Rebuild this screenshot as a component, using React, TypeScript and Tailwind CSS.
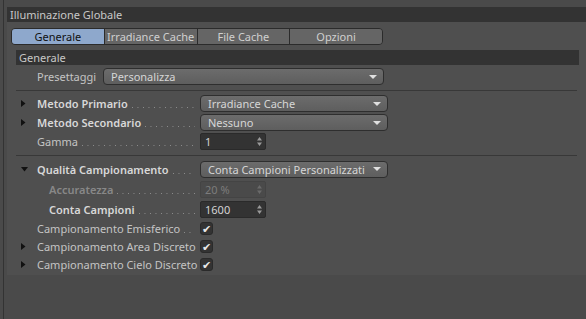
import React from 'react';

const font = "font-['Noto_Sans','DejaVu_Sans',sans-serif]";

const tabs = ['Generale', 'Irradiance Cache', 'File Cache', 'Opzioni'];

const Arrow = ({ open }: { open?: boolean }) =>
  open ? (
    <svg width="7" height="5" viewBox="0 0 7 5"><path d="M0 0h7L3.5 4.5z" fill="#111" /></svg>
  ) : (
    <svg width="5" height="7" viewBox="0 0 5 7"><path d="M0 0v7l4.5-3.5z" fill="#111" /></svg>
  );

const Label = ({
  text,
  bold,
  dim,
  indent,
  arrow,
  open,
}: {
  text: string;
  bold?: boolean;
  dim?: boolean;
  indent?: boolean;
  arrow?: boolean;
  open?: boolean;
}) => (
  <div
    className={`w-[193px] shrink-0 flex items-center pl-[14px] pr-[5px] ${
      dim ? 'text-[#888888]' : bold ? 'text-[#d8d8d8]' : 'text-[#c4c4c4]'
    }`}
  >
    <span className="w-[16px] shrink-0 flex items-center">{arrow && <Arrow open={open} />}</span>
    {indent && <span className="w-[12px] shrink-0" />}
    <span className={`shrink-0 whitespace-nowrap ${bold ? 'font-semibold' : ''}`}>{text}</span>
    {/* dotted leader */}
    <div className="flex-1 min-w-0 h-px mt-[8px] ml-[4px] bg-[linear-gradient(to_right,#8e8e8e_1px,transparent_1px)] bg-[length:5.5px_1px]" />
  </div>
);

const Dropdown = ({ value, w }: { value: string; w: string }) => (
  <div
    className={`${w} h-[17px] rounded-[4px] border border-[#2e2e2e] bg-gradient-to-b from-[#6c6c6c] to-[#5e5e5e] flex items-center pl-[7px] pr-[6px] text-[#d6d6d6]`}
  >
    <span className="flex-1 whitespace-nowrap">{value}</span>
    <svg width="8" height="4" viewBox="0 0 8 4"><path d="M0 0h8L4 4z" fill="#e0e0e0" /></svg>
  </div>
);

const NumField = ({ value, dim }: { value: string; dim?: boolean }) => (
  <div
    className={`w-[66px] h-[17px] rounded-[2px] border flex items-center pl-[4px] pr-[3px] ${
      dim ? 'bg-[#4a4a4a] border-[#444] text-[#7c7c7c]' : 'bg-[#333333] border-[#2a2a2a] text-[#d4d4d4]'
    }`}
  >
    <span className="flex-1">{value}</span>
    <svg width="5" height="9" viewBox="0 0 5 9">
      <path d="M0 3.5h5L2.5 0z M0 5.5h5L2.5 9z" fill={dim ? '#6a6a6a' : '#9a9a9a'} />
    </svg>
  </div>
);

const Check = () => (
  <div className="w-[13px] h-[13px] rounded-[3px] bg-[#333333] border border-[#2a2a2a] flex items-center justify-center text-[#e8e8e8] text-[11px] leading-none">
    ✔
  </div>
);

const Sep = ({ className }: { className: string }) => <div className={`h-px bg-[#383838] mx-[9px] ${className}`} />;

export default function App() {
  return (
    <div className={`w-[586px] h-[319px] bg-[#4a4a4a] flex text-[11px] leading-none overflow-hidden ${font}`}>
      <div className="w-[7px] shrink-0 pl-[3px]">
        <div className="w-px h-full bg-[#333333]" />
      </div>
      <div className="flex-1 flex flex-col pt-[7px]">
        <div className="h-[15px] bg-[#333333] flex items-center pl-[3px] text-[#c8c8c8]">Illuminazione Globale</div>
        <div className="bg-[#4f4f4f] h-[253px] pt-[6px]">
          <div className="ml-[4px] flex h-[17px] w-[372px] rounded-[4px] border border-[#2b2b2b] overflow-hidden">
            {tabs.map((t, i) => (
              <div
                key={t}
                className={`flex-1 flex items-center justify-center ${i > 0 ? 'border-l border-[#2b2b2b]' : ''} ${
                  i === 0 ? 'bg-[#8ea8cc] text-[#111]' : 'bg-[#656565] text-[#d0d0d0]'
                }`}
              >
                {t}
              </div>
            ))}
          </div>
          <div className="mt-[5px] ml-[9px] w-[563px] h-[15px] bg-[#333333] flex items-center pl-[3px] text-[#c8c8c8]">
            Generale
          </div>
          <div className="mt-[3px] flex items-center h-[17px]">
            <div className="w-[96px] pl-[30px] text-[#c4c4c4]">Presettaggi</div>
            <Dropdown value="Personalizza" w="w-[281px]" />
          </div>
          <Sep className="mt-[5px] mb-[3px]" />
          <div className="flex flex-col">
            <div className="flex items-center h-[19px]">
              <Label text="Metodo Primario" bold arrow />
              <Dropdown value="Irradiance Cache" w="w-[188px]" />
            </div>
            <div className="flex items-center h-[19px]">
              <Label text="Metodo Secondario" bold arrow />
              <Dropdown value="Nessuno" w="w-[188px]" />
            </div>
            <div className="flex items-center h-[19px]">
              <Label text="Gamma" />
              <NumField value="1" />
            </div>
          </div>
          <Sep className="mt-[4px] mb-[3px]" />
          <div className="flex flex-col">
            <div className="flex items-center h-[20px]">
              <Label text="Qualità Campionamento" bold arrow open />
              <Dropdown value="Conta Campioni Personalizzati" w="w-[188px]" />
            </div>
            <div className="flex items-center h-[20px]">
              <Label text="Accuratezza" bold dim indent />
              <NumField value="20 %" dim />
            </div>
            <div className="flex items-center h-[20px]">
              <Label text="Conta Campioni" bold indent />
              <NumField value="1600" />
            </div>
            <div className="flex items-center h-[18px]">
              <Label text="Campionamento Emisferico" />
              <Check />
            </div>
            <div className="flex items-center h-[18px]">
              <Label text="Campionamento Area Discreto" arrow />
              <Check />
            </div>
            <div className="flex items-center h-[18px]">
              <Label text="Campionamento Cielo Discreto" arrow />
              <Check />
            </div>
          </div>
        </div>
      </div>
    </div>
  );
}
